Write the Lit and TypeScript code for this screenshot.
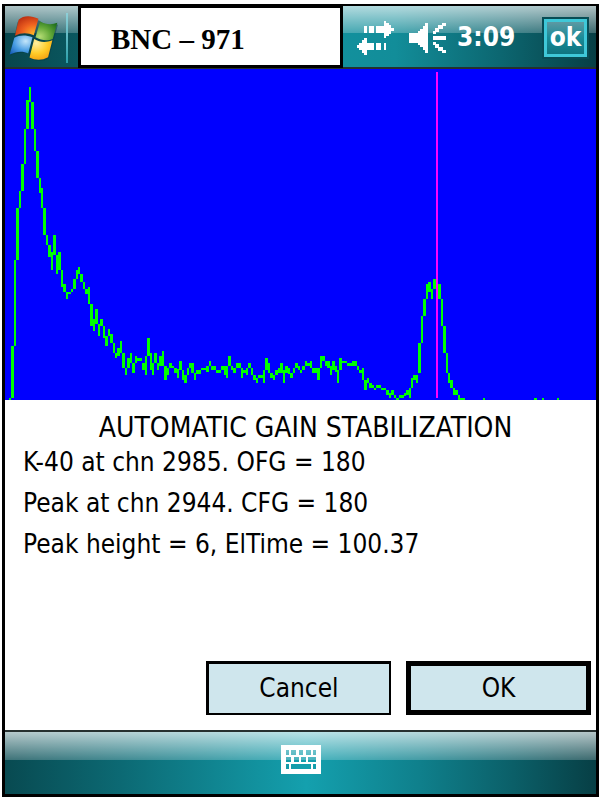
import { LitElement, html, css, svg } from "lit";
import { customElement } from "lit/decorators.js";

/* Spectrum columns: x, width, top, bottom. */
const SPECTRUM: number[][] = [
  [9,2,398,400],[11,3,346,398],[14,2,260,346],[16,3,208,260],[19,2,191,208],[21,3,164,191],
  [24,2,129,164],[26,3,100,129],[29,2,87,102],[31,3,102,129],[34,2,129,151],[36,3,151,178],
  [39,2,178,193],[41,2,188,208],[43,3,208,235],[46,2,235,245],[48,3,245,257],[51,2,252,270],
  [53,3,235,255],[56,2,255,274],[58,3,252,270],[61,2,270,287],[63,3,284,292],[66,2,292,299],
  [68,3,292,294],[71,2,289,292],[73,3,279,289],[76,2,270,279],[78,2,267,274],[80,3,274,282],
  [83,2,282,289],[85,3,289,294],[88,2,287,304],[90,3,304,326],[93,2,319,331],[95,3,309,324],
  [98,2,324,336],[100,3,319,326],[103,2,326,338],[105,3,336,346],[108,2,329,336],[110,3,334,343],
  [113,2,343,353],[115,2,353,358],[117,3,348,356],[120,2,341,353],[122,3,353,368],[125,2,368,375],
  [127,3,358,368],[130,2,353,363],[132,3,363,373],[135,2,356,363],[137,5,358,361],[142,3,363,370],
  [145,2,356,375],[147,3,338,356],[150,2,353,370],[152,2,363,375],[154,3,353,363],[157,2,363,370],
  [159,3,356,366],[162,2,351,366],[164,3,366,380],[167,2,368,375],[169,3,363,368],[172,2,366,368],
  [174,3,368,373],[177,2,369,378],[179,3,361,370],[182,2,370,380],[184,3,375,383],[187,2,368,375],
  [189,3,363,368],[191,3,363,373],[194,2,373,380],[196,5,370,374],[201,5,368,370],[206,3,366,372],
  [209,2,361,366],[211,5,366,370],[216,5,370,373],[221,3,366,370],[224,2,366,375],[226,2,366,378],
  [228,3,356,366],[231,2,366,370],[233,3,368,373],[236,5,363,368],[241,2,368,378],[243,5,370,373],
  [246,2,368,375],[248,3,363,368],[251,2,368,375],[253,3,375,380],[256,2,378,383],[258,5,375,378],
  [263,2,370,383],[265,3,358,370],[268,2,363,373],[270,3,373,378],[273,2,375,380],[275,3,370,375],
  [278,2,368,373],[280,3,363,373],[283,2,370,383],[285,3,366,373],[288,2,368,374],[290,3,373,378],
  [293,2,368,373],[295,3,363,368],[298,2,366,370],[300,2,370,373],[302,3,366,370],[305,2,361,366],
  [307,3,363,366],[310,2,361,368],[312,3,368,373],[315,2,368,373],[317,3,368,380],[320,2,356,368],
  [322,3,356,361],[325,2,361,366],[327,3,361,368],[330,2,366,375],[332,3,361,370],[335,2,366,372],
  [337,2,370,383],[339,3,358,370],[342,5,361,363],[347,5,363,366],[352,5,361,366],[357,2,366,370],
  [359,4,370,373],[362,2,368,380],[364,3,380,390],[367,2,378,383],[369,3,383,388],[372,2,385,388],
  [374,2,388,390],[376,5,385,388],[381,5,388,390],[386,3,390,395],[389,2,393,398],[391,3,390,395],
  [394,2,395,398],[396,3,398,400],[399,5,395,398],[404,2,393,396],[406,5,390,395],[409,2,388,398],
  [411,2,378,388],[413,5,375,380],[416,2,375,383],[418,3,343,373],[421,2,316,343],[423,3,299,316],
  [426,2,284,299],[428,3,282,292],[431,2,289,299],[433,3,279,289],[438,3,284,299],[441,2,299,326],
  [443,3,326,353],[446,2,353,373],[448,2,373,383],[450,3,380,388],[453,2,388,395],[455,3,390,395],
  [458,2,395,400],[460,5,398,400],[483,2,398,400],[534,3,398,400],[542,2,398,400],[557,2,398,400],
];

const tracePath = SPECTRUM.map(([x, w, top, bottom]) => `M${x} ${top}h${w}V${bottom}h-${w}z`).join("");

const blocks = (list: number[][]) =>
  list.map(([x, y, w, h]) => svg`<rect x=${x} y=${y} width=${w} height=${h}></rect>`);

const ARROWS = [
  [7,5,3,7],[12,5,5,7],[19,5,9,7],[27,0,2,17],[29,2,3,13],[32,4,2,9],[34,7,3,3],
  [0,24,2,3],[2,22,3,7],[5,19,2,13],[7,17,3,17],[10,22,7,7],[19,22,5,7],[27,22,2,7],
];

const WAVES = [
  [24,13,13,4],
  [33,0,4,3],[29,2,5,4],[26,5,4,4],[24,8,3,3],
  [24,19,3,3],[26,21,4,4],[29,24,5,4],[33,27,4,3],
];

const KEYS = [
  [5,5,3,5],[10,5,5,5],[18,5,4,5],[25,5,5,5],[32,5,3,5],
  [5,12,5,5],[13,12,5,5],[20,12,5,5],[27,12,8,5],
  [5,19,3,5],[10,19,20,5],[32,19,3,5],
];
const keyboardPath =
  "M0 0h40v29h-40z" + KEYS.map(([x, y, w, h]) => `M${x} ${y}h${w}v${h}h-${w}z`).join("");

@customElement("spectrum-chart")
class SpectrumChart extends LitElement {
  static styles = css`
    :host { display: block; background: #0000ff; }
    .plot { display: block; width: 100%; height: 331px; }
    .trace { fill: #00ff00; }
    .marker { fill: #ff00ff; }
  `;
  render() {
    return html`<svg class="plot" viewBox="5 69 591 331" preserveAspectRatio="none"
      shape-rendering="crispEdges" role="img" aria-label="Spectrum">
      <path class="trace" d=${tracePath}></path>
      <rect class="marker" x="436" y="72" width="2" height="326"></rect>
    </svg>`;
  }
}

@customElement("status-bar")
class StatusBar extends LitElement {
  static styles = css`
    :host {
      display: flex;
      height: 61px;
      border-bottom: 2px solid #26302f;
      background:
        linear-gradient(rgba(255,255,255,.68), rgba(255,255,255,.22)) top / 100% 27px no-repeat,
        linear-gradient(90deg, #08464d, #0a5a62 14%, #12929f 52%, #128d99 66%, #0c6670 84%, #073f45);
      color: #fff;
      font-family: "DejaVu Sans Condensed", "DejaVu Sans", sans-serif;
      font-weight: bold;
      font-size: 26px;
    }
    button { padding: 0; border: 0; background: none; color: inherit; font: inherit; }
    svg { display: block; flex: none; }
    .start { display: flex; align-items: center; flex: none; width: 73px; padding: 5px 10px 3px 4px; box-sizing: border-box; }
    .start svg { margin-right: 8px; }
    .divider { width: 2px; height: 50px; background: linear-gradient(#8fd0d8, #2a9fab); }
    .title {
      flex: 1;
      display: flex;
      align-items: center;
      margin: -1px 0 -1px;
      padding: 5px 0 0 30px;
      border: 3px solid #000;
      background: #fff;
      color: #000;
      font: bold 29px "Liberation Serif", serif;
      white-space: pre;
    }
    .tray { flex: none; width: 253px; box-sizing: border-box; display: flex; align-items: center; padding: 2px 7px 0 14px; }
    .volume { margin-left: 15px; }
    .clock { margin-left: 11px; }
    .ok {
      margin-left: auto;
      width: 47px;
      height: 42px;
      border: 2px solid #084d55;
      box-sizing: border-box;
      background: #084d55;
    }
    .ok-face {
      display: block;
      height: 38px;
      box-sizing: border-box;
      border: 3px solid #3fc8d8;
      background: linear-gradient(#5d99a3, #1a8b97 50%, #0f7480);
      line-height: 30px;
    }
  `;
  render() {
    return html`
      <button class="start" aria-label="Start">
        <svg width="49" height="46" viewBox="28 45 148 138">
          <defs>
            <radialGradient id="r" cx=".8" cy=".9" r="1"><stop offset="0" stop-color="#ffb428"/><stop offset=".5" stop-color="#ee6020"/><stop offset="1" stop-color="#b82c10"/></radialGradient>
            <radialGradient id="g" cx=".2" cy=".8" r="1"><stop offset="0" stop-color="#b4dc74"/><stop offset=".5" stop-color="#62a838"/><stop offset="1" stop-color="#1c6c1c"/></radialGradient>
            <radialGradient id="b" cx=".7" cy=".3" r="1"><stop offset="0" stop-color="#c4e6fa"/><stop offset=".5" stop-color="#4a9ee4"/><stop offset="1" stop-color="#0c50b0"/></radialGradient>
            <radialGradient id="y" cx=".3" cy=".2" r="1"><stop offset="0" stop-color="#fff0a0"/><stop offset=".5" stop-color="#ffcc28"/><stop offset="1" stop-color="#ee9008"/></radialGradient>
          </defs>
          <path fill="#053c44" opacity=".5" d="M54 66C69 51 99 51 120 62C144 80 158 78 176 73L148 176C132 186 110 184 92 176L88 162C72 156 52 158 32 167Z"/>
          <path fill="url(#r)" d="M57 59C72 45 95 46 117 56L103 106C85 97 65 97 46 107Z"/>
          <path fill="url(#g)" d="M122 64C140 74 158 74 174 68L160 117C145 124 125 122 108 112Z"/>
          <path fill="url(#b)" d="M44 113C60 104 80 104 99 112L86 161C70 152 50 154 30 164Z"/>
          <path fill="url(#y)" d="M104 117C122 128 140 128 159 121L146 172C128 182 108 182 90 173Z"/>
        </svg>
        <span class="divider"></span>
      </button>
      <div class="title">BNC – 971</div>
      <div class="tray">
        <svg width="37" height="34" fill="#fff" shape-rendering="crispEdges">${blocks(ARROWS)}</svg>
        <svg class="volume" width="37" height="30" fill="#fff" shape-rendering="crispEdges">
          <path d="M0 10h9v-2h2v-2h3v-3h2v-3h3v30h-3v-3h-2v-3h-3v-2h-2v-2h-9z"/>
          ${blocks(WAVES)}
        </svg>
        <span class="clock">3:09</span>
        <button class="ok"><span class="ok-face">ok</span></button>
      </div>`;
  }
}

@customElement("app-root")
class AppRoot extends LitElement {
  static styles = css`
    :host { display: block; box-sizing: border-box; min-height: 100vh; padding: 4px 2px 0; background: #fff; }
    .device {
      display: flex;
      flex-direction: column;
      box-sizing: border-box;
      min-height: calc(100vh - 4px);
      border: 3px solid #000;
      border-top-width: 2px;
      background: #fff;
      color: #000;
      font: 26px/41px "DejaVu Sans Condensed", "DejaVu Sans", sans-serif;
    }
    .report { flex: 1; padding: 7px 8px 0 18px; }
    h1 { margin: 0; font: inherit; font-size: 28px; line-height: 41px; text-align: center; }
    p { margin: 0; }
    .lines { margin-top: -6px; }
    .actions { display: flex; justify-content: flex-end; gap: 15px; padding: 0 5px 15px; }
    .action {
      width: 185px;
      height: 54px;
      box-sizing: border-box;
      padding: 0;
      border: solid #000;
      border-width: 3px 2px 2px 3px;
      border-radius: 0;
      background: #cfe6ed;
      color: #000;
      font: inherit;
    }
    .primary { border-width: 5px; }
    .softbar {
      display: flex;
      justify-content: center;
      height: 62px;
      border-top: 2px solid #26302f;
      background:
        linear-gradient(rgba(255,255,255,.7), rgba(255,255,255,.22)) top / 100% 28px no-repeat,
        linear-gradient(90deg, #084a51, #0c6a74 20%, #14a0ae 51%, #0f808c 70%, #0b5f68 86%, #073f45);
    }
    .keyboard { padding: 0 0 7px; border: 0; background: none; }
    .keyboard svg { display: block; }
  `;
  render() {
    return html`<main class="device">
      <status-bar></status-bar>
      <spectrum-chart></spectrum-chart>
      <section class="report">
        <h1>AUTOMATIC GAIN STABILIZATION</h1>
        <div class="lines">
          <p>K-40 at chn 2985. OFG = 180</p>
          <p>Peak at chn 2944. CFG = 180</p>
          <p>Peak height = 6, ElTime = 100.37</p>
        </div>
      </section>
      <div class="actions">
        <button class="action">Cancel</button>
        <button class="action primary">OK</button>
      </div>
      <footer class="softbar">
        <button class="keyboard" aria-label="Keyboard">
          <svg width="40" height="29" fill="#fff" fill-rule="evenodd" shape-rendering="crispEdges"><path d=${keyboardPath}></path></svg>
        </button>
      </footer>
    </main>`;
  }
}
